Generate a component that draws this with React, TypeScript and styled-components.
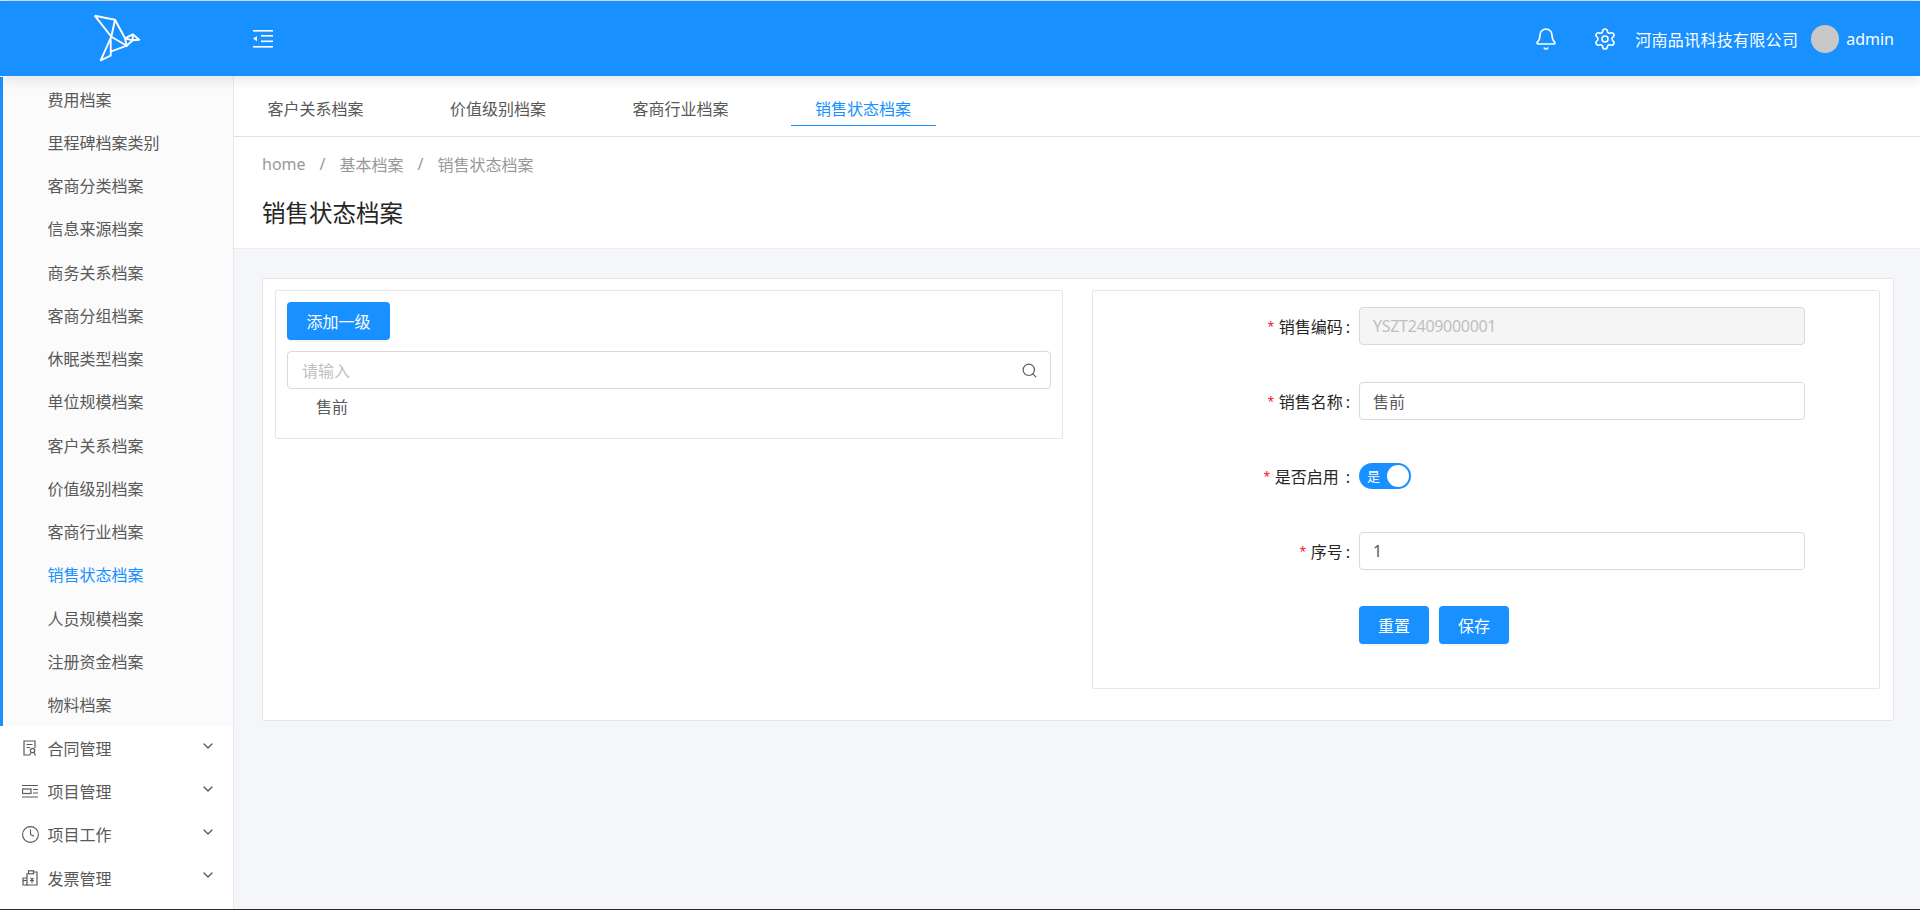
import styled, { createGlobalStyle } from "styled-components";
import { Bell, ChevronDown, Clock, Search, Settings } from "lucide-react";

const GlobalStyle = createGlobalStyle`
  html, body {
    margin: 0;
    padding: 0;
    height: 100%;
    overflow: hidden;
    background: #f5f6fa;
    font-family: "Noto Sans", "Noto Sans CJK SC", sans-serif;
  }
  * {
    box-sizing: border-box;
  }
`;

const Page = styled.div`
  width: 1920px;
  height: 910px;
  display: flex;
  flex-direction: column;
  border-top: 1px solid #dcdfe6;
  border-bottom: 1px solid #2b2b2f;
`;

const Header = styled.header`
  position: relative;
  z-index: 2;
  flex: 0 0 75px;
  display: flex;
  align-items: center;
  background: #1890ff;
  color: #fff;
  box-shadow: 0 4px 12px rgba(0, 0, 0, 0.1);
`;

const LogoBox = styled.div`
  width: 233px;
  flex: 0 0 auto;
  display: flex;
  justify-content: center;
  padding-right: 3px;
  margin-top: -2px;
`;

const Collapse = styled.div`
  margin-left: 20px;
  display: flex;
`;

const HeaderRight = styled.div`
  margin-left: auto;
  display: flex;
  align-items: center;
  padding-right: 26px;
  font-size: 16px;
`;

const HeaderIcons = styled.div`
  display: flex;
  gap: 35px;
  margin-right: 18px;
`;

const Company = styled.span`
  margin-right: 13px;
  letter-spacing: 0.3px;
`;

const Avatar = styled.span`
  width: 28px;
  height: 28px;
  border-radius: 50%;
  background: #c8c8c8;
  margin-right: 7px;
`;

const Body = styled.div`
  flex: 1;
  display: flex;
  min-height: 0;
`;

const Sidebar = styled.aside`
  width: 234px;
  flex: 0 0 auto;
  background: #fff;
  border-right: 1px solid #e8e8ee;
  padding-top: 1px;
  font-size: 16px;
  color: #595959;
`;

const SubMenu = styled.div`
  background: #fbfbfc;
  border-left: 3px solid #1890ff;
  margin-bottom: 1px;
`;

const SubItem = styled.div<{ $active?: boolean }>`
  height: 43.25px;
  display: flex;
  align-items: center;
  padding-left: 44.5px;
  color: ${(p) => (p.$active ? "#1890ff" : "#595959")};
`;

const MenuItem = styled.div`
  height: 43.1px;
  display: flex;
  align-items: center;
  padding-left: 22px;
  padding-right: 18px;
`;

const MenuIcon = styled.span`
  width: 16px;
  height: 16px;
  display: flex;
  align-items: center;
  justify-content: center;
  margin-right: 9.5px;
  color: #595959;

  svg {
    flex: none;
  }
`;

const MenuLabel = styled.span`
  flex: 1;
`;

const Arrow = styled.span`
  display: flex;
  margin-top: -5px;
  margin-right: -1px;
  color: #595959;
`;

const Main = styled.main`
  flex: 1;
  min-width: 0;
  display: flex;
  flex-direction: column;
`;

const Tabs = styled.nav`
  flex: 0 0 61px;
  display: flex;
  gap: 37.5px;
  background: #fff;
  border-bottom: 1px solid #e0e0e0;
  padding: 0 0 10px 9px;
`;

const Tab = styled.div<{ $active?: boolean }>`
  width: 145px;
  height: 50px;
  display: flex;
  align-items: flex-end;
  justify-content: center;
  padding-bottom: 5px;
  font-size: 16px;
  color: ${(p) => (p.$active ? "#1890ff" : "#595959")};
  border-bottom: 1px solid ${(p) => (p.$active ? "#1890ff" : "transparent")};
`;

const PageHead = styled.div`
  flex: 0 0 112px;
  background: #fff;
  border-bottom: 1px solid #ececf0;
  padding: 16px 0 0 28px;
`;

const Crumbs = styled.div`
  display: flex;
  height: 22px;
  align-items: center;
  gap: 14px;
  font-size: 16px;
  color: #999;
`;

const Title = styled.h1`
  margin: 22px 0 0;
  font-size: 23.5px;
  line-height: 32px;
  font-weight: 400;
  color: #262626;
`;

const Content = styled.div`
  flex: 1;
  padding: 29px 26px 0 28px;
  background: #f5f6fa;
`;

const Card = styled.section`
  height: 443px;
  display: grid;
  grid-template-columns: 1fr 1fr;
  align-items: start;
  gap: 29px;
  padding: 11px 13px 0 12px;
  background: #fff;
  border: 1px solid #e6e6e6;
  border-radius: 2px;
`;

const Panel = styled.div<{ $height: number }>`
  height: ${(p) => p.$height}px;
  border: 1px solid #e6e6e6;
  border-radius: 2px;
`;

const TreePanel = styled(Panel)`
  padding: 11px 11px 0 11px;
`;

const PrimaryButton = styled.button`
  height: 38px;
  padding: 0 19.5px;
  border: 0;
  border-radius: 4px;
  background: #1890ff;
  color: #fff;
  font: inherit;
  font-size: 16px;
  box-shadow: 0 2px 0 rgba(0, 0, 0, 0.04);
`;

const SearchBox = styled.div`
  margin-top: 11px;
  height: 38px;
  display: flex;
  align-items: center;
  justify-content: space-between;
  padding: 0 12px 0 14px;
  border: 1px solid #d9d9d9;
  border-radius: 4px;
  font-size: 16px;
  color: #bfbfbf;
`;

const TreeNode = styled.div`
  margin-top: 7px;
  padding-left: 29px;
  font-size: 16px;
  line-height: 22px;
  color: #595959;
`;

const FormPanel = styled(Panel)`
  padding-top: 16px;
`;

const Row = styled.div`
  display: flex;
  align-items: center;
  height: 38px;
  margin-bottom: 37px;
`;

const Label = styled.div`
  width: 266px;
  padding-right: 9px;
  text-align: right;
  font-size: 16px;
  color: #262626;
`;

const Star = styled.span`
  font-family: "Liberation Mono", monospace;
  font-size: 16px;
  color: #f5222d;
  margin-right: 3px;
`;

const Colon = styled.span<{ $gap: number }>`
  margin-left: ${(p) => p.$gap}px;
`;

const Input = styled.div<{ $disabled?: boolean }>`
  width: 446px;
  height: 38px;
  display: flex;
  align-items: center;
  padding: 0 13px;
  border: 1px solid #d9d9d9;
  border-radius: 4px;
  font-size: 16px;
  letter-spacing: ${(p) => (p.$disabled ? "-0.3px" : "normal")};
  background: ${(p) => (p.$disabled ? "#f5f5f5" : "#fff")};
  color: ${(p) => (p.$disabled ? "#bfbfbf" : "#595959")};
`;

const Switch = styled.div`
  position: relative;
  width: 52px;
  height: 26px;
  border-radius: 13px;
  background: #1890ff;
  color: #fff;
  font-size: 13px;
  line-height: 26px;
  padding-left: 8px;
`;

const SwitchKnob = styled.span`
  position: absolute;
  top: 2px;
  right: 2px;
  width: 22px;
  height: 22px;
  border-radius: 50%;
  background: #fff;
`;

const Actions = styled.div`
  display: flex;
  gap: 10px;
  margin: -1px 0 0 266px;
`;

const FormButton = styled(PrimaryButton)`
  padding: 0 19px;
`;

const subItems = [
  "费用档案",
  "里程碑档案类别",
  "客商分类档案",
  "信息来源档案",
  "商务关系档案",
  "客商分组档案",
  "休眠类型档案",
  "单位规模档案",
  "客户关系档案",
  "价值级别档案",
  "客商行业档案",
  "销售状态档案",
  "人员规模档案",
  "注册资金档案",
  "物料档案",
];

const Logo = () => (
  <svg width="70" height="65" viewBox="0 0 70 65" fill="none" stroke="#fff" strokeWidth="1.9" strokeLinejoin="round">
    <path d="M14.7 10.7 L35 14.7 L45 33.3 L52.7 29.3 L59.3 34.7 L52.7 35.3 L46.7 40.7 L30.7 46.7" />
    <path d="M14.7 10.7 L31.3 31.7 L46.7 40.7 L45 33.3" />
    <path d="M35 14.7 L31.3 31.7 L20.7 55.3 L30.7 50.7 L30.7 33" />
    <path d="M45 33.3 L52.7 35.3 L52.7 29.3" />
  </svg>
);

const CollapseIcon = () => (
  <svg width="20" height="18" viewBox="0 0 20 18" fill="#fff">
    <rect x="0" y="0" width="20" height="1.6" />
    <rect x="8" y="5" width="12" height="1.6" />
    <rect x="8" y="10.5" width="12" height="1.6" />
    <rect x="0" y="16" width="20" height="1.6" />
    <path d="M4 6 L0 8.6 L4 11.2 Z" />
  </svg>
);

const ContractIcon = () => (
  <svg width="16" height="16" viewBox="0 0 16 16" fill="none" stroke="currentColor" strokeWidth="1.2">
    <path d="M7 15 H2 V1 H13 V8" />
    <path d="M4.5 4.5 H10.5 M4.5 7.5 H8" />
    <circle cx="10.5" cy="10.5" r="2.2" />
    <path d="M7.5 15.5 L9 12.5 M13.5 15.5 L12 12.5" />
  </svg>
);

const ProjectIcon = () => (
  <svg width="16" height="16" viewBox="0 0 16 16" fill="none" stroke="currentColor" strokeWidth="1.2">
    <path d="M0 2.5 H16 M0 14 H16" />
    <rect x="0.5" y="6" width="8.5" height="4.5" />
    <path d="M11 6.5 H16 M11 10 H16" />
  </svg>
);

const InvoiceIcon = () => (
  <svg width="16" height="16" viewBox="0 0 16 16" fill="none" stroke="currentColor" strokeWidth="1.2">
    <path d="M5 3 V15 H15 V2 H12" />
    <path d="M5 8 H1 V15 H6" />
    <path d="M1 10.5 H5" />
    <rect x="6.5" y="0.8" width="5" height="3" />
    <path d="M8.5 8 L10 9.5 L11.5 8 M8 10.5 H12 M10 9.5 V13" />
  </svg>
);

const menus = [
  { label: "合同管理", icon: <ContractIcon /> },
  { label: "项目管理", icon: <ProjectIcon /> },
  { label: "项目工作", icon: <Clock size={19} strokeWidth={1.4} /> },
  { label: "发票管理", icon: <InvoiceIcon /> },
];

const App = () => {
  return (
    <Page>
      <GlobalStyle />
      <Header>
        <LogoBox>
          <Logo />
        </LogoBox>
        <Collapse>
          <CollapseIcon />
        </Collapse>
        <HeaderRight>
          <HeaderIcons>
            <Bell size={24} strokeWidth={1.6} />
            <Settings size={24} strokeWidth={1.6} />
          </HeaderIcons>
          <Company>河南品讯科技有限公司</Company>
          <Avatar />
          <span>admin</span>
        </HeaderRight>
      </Header>
      <Body>
        <Sidebar>
          <SubMenu>
            {subItems.map((item) => (
              <SubItem key={item} $active={item === "销售状态档案"}>
                {item}
              </SubItem>
            ))}
          </SubMenu>
          {menus.map((m) => (
            <MenuItem key={m.label}>
              <MenuIcon>{m.icon}</MenuIcon>
              <MenuLabel>{m.label}</MenuLabel>
              <Arrow>
                <ChevronDown size={16} strokeWidth={2} />
              </Arrow>
            </MenuItem>
          ))}
        </Sidebar>
        <Main>
          <Tabs>
            <Tab>客户关系档案</Tab>
            <Tab>价值级别档案</Tab>
            <Tab>客商行业档案</Tab>
            <Tab $active>销售状态档案</Tab>
          </Tabs>
          <PageHead>
            <Crumbs>
              <span>home</span>
              <span>/</span>
              <span>基本档案</span>
              <span>/</span>
              <span>销售状态档案</span>
            </Crumbs>
            <Title>销售状态档案</Title>
          </PageHead>
          <Content>
            <Card>
              <TreePanel $height={149}>
                <PrimaryButton>添加一级</PrimaryButton>
                <SearchBox>
                  请输入
                  <Search size={17} strokeWidth={1.6} color="#595959" />
                </SearchBox>
                <TreeNode>售前</TreeNode>
              </TreePanel>
              <FormPanel $height={399}>
                <Row>
                  <Label>
                    <Star>*</Star>销售编码<Colon $gap={3}>:</Colon>
                  </Label>
                  <Input $disabled>YSZT2409000001</Input>
                </Row>
                <Row>
                  <Label>
                    <Star>*</Star>销售名称<Colon $gap={3}>:</Colon>
                  </Label>
                  <Input>售前</Input>
                </Row>
                <Row>
                  <Label>
                    <Star>*</Star>是否启用<Colon $gap={7}>:</Colon>
                  </Label>
                  <Switch>
                    是
                    <SwitchKnob />
                  </Switch>
                </Row>
                <Row>
                  <Label>
                    <Star>*</Star>序号<Colon $gap={3}>:</Colon>
                  </Label>
                  <Input>1</Input>
                </Row>
                <Actions>
                  <FormButton>重置</FormButton>
                  <FormButton>保存</FormButton>
                </Actions>
              </FormPanel>
            </Card>
          </Content>
        </Main>
      </Body>
    </Page>
  );
};

export default App;
